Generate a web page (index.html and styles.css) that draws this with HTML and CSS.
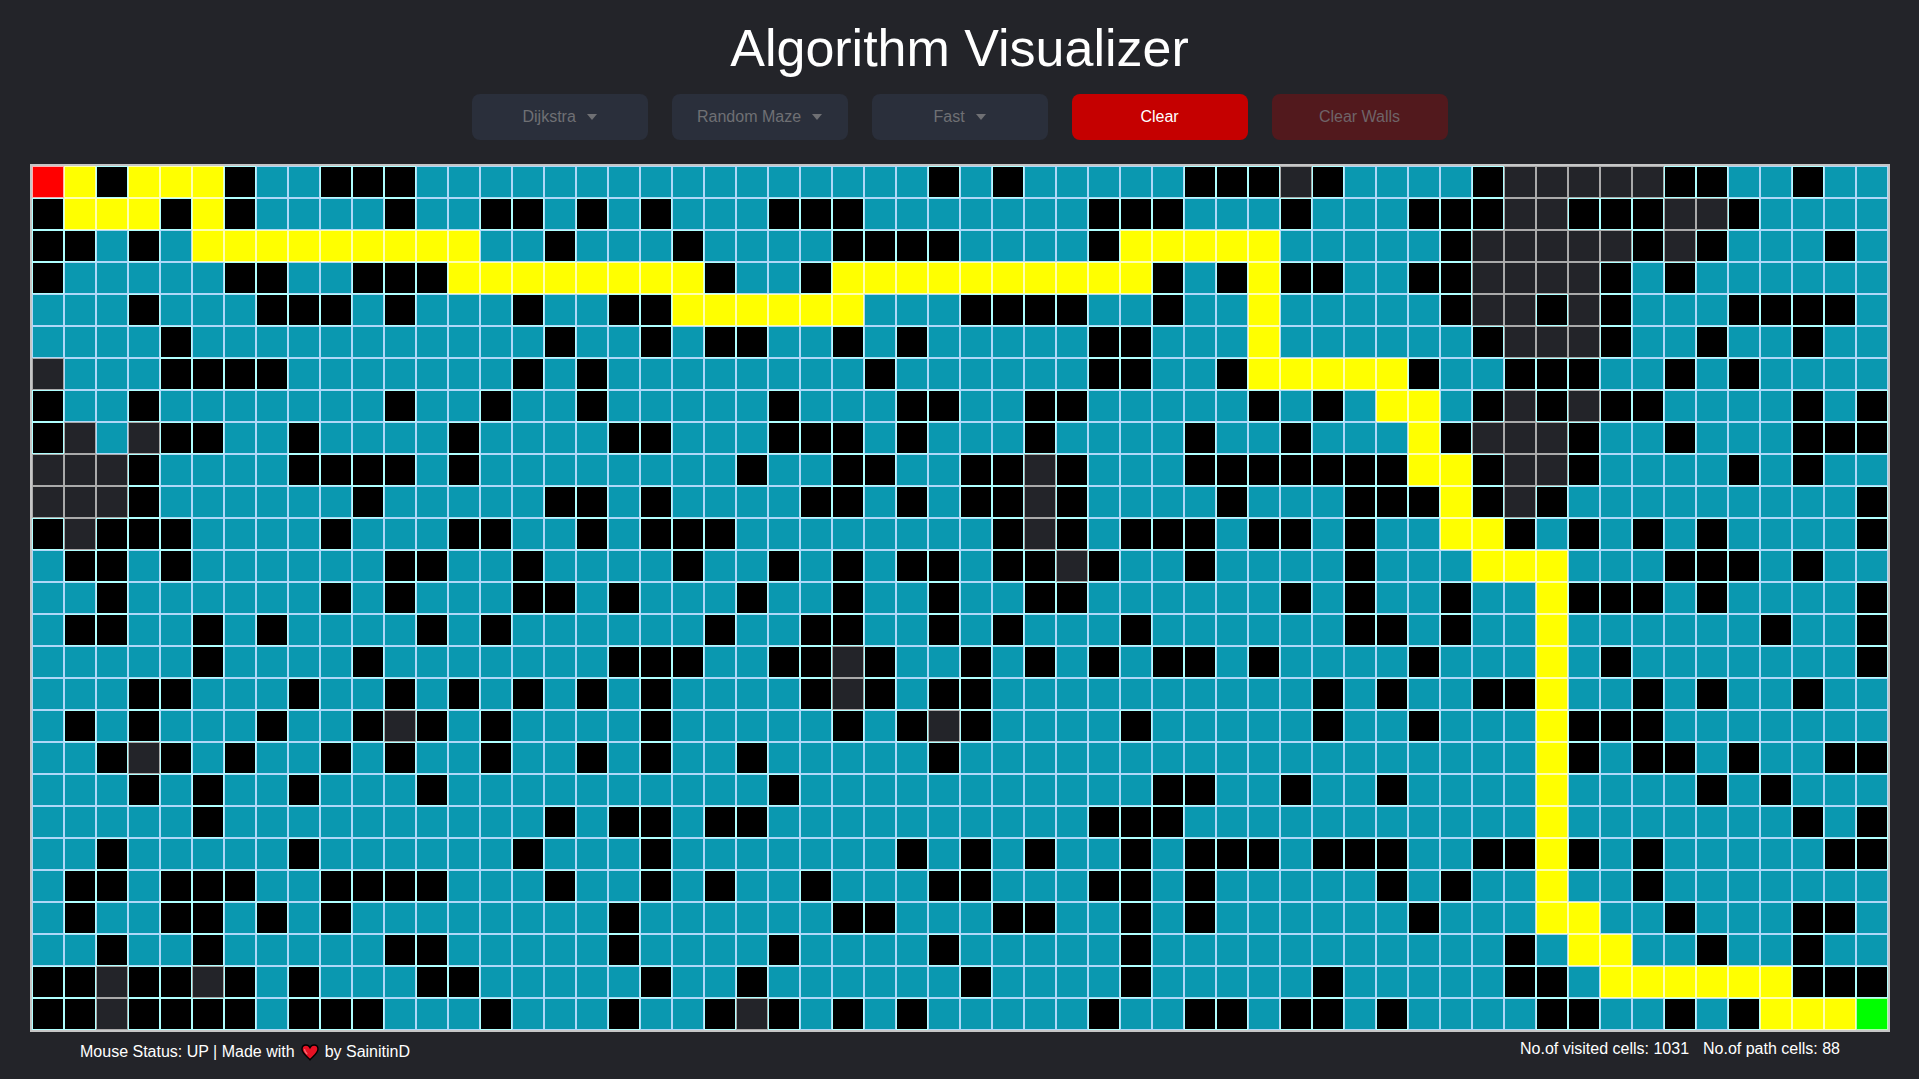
FILE: index.html
```html
<!DOCTYPE html>
<html lang="en">
<head>
  <meta charset="utf-8">
  <meta name="viewport" content="width=device-width, initial-scale=1">
  <title>Algorithm Visualizer</title>
  <link rel="stylesheet" href="styles.css">
</head>
<body>
  <header class="header">
    <h1 class="title">Algorithm Visualizer</h1>
    <div class="toolbar">
      <div class="dropdown">
        <select class="dropdown-select" aria-label="Algorithm" disabled>
          <option selected>Dijkstra</option>
        </select>
        <svg class="caret" viewBox="0 0 10 6" aria-hidden="true"><path d="M0 0h10L5 6z"/></svg>
      </div>
      <div class="dropdown">
        <select class="dropdown-select" aria-label="Maze" disabled>
          <option selected>Random Maze</option>
        </select>
        <svg class="caret" viewBox="0 0 10 6" aria-hidden="true"><path d="M0 0h10L5 6z"/></svg>
      </div>
      <div class="dropdown">
        <select class="dropdown-select" aria-label="Speed" disabled>
          <option selected>Fast</option>
        </select>
        <svg class="caret" viewBox="0 0 10 6" aria-hidden="true"><path d="M0 0h10L5 6z"/></svg>
      </div>
      <button class="button" type="button">Clear</button>
      <button class="button" type="button" disabled>Clear Walls</button>
    </div>
  </header>

  <main class="board" id="board"></main>

  <footer class="footer">
    <p class="credit">
      <span>Mouse Status: UP | Made with</span>
      <svg class="heart" viewBox="0 0 18 17" role="img" aria-label="love">
        <path d="M9 15.8C6.600 12.800 1 9.600 1 5.100 1 2.600 2.800 1 5 1c1.700 0 3.200 1 4 2.600C9.800 2 11.300 1 13 1c2.200 0 4 1.600 4 4.100 0 4.500-5.600 7.700-8 10.700z" fill="#e81224" stroke="#000" stroke-width="1.400"/>
        <path d="M3.600 5.600c.1 1.600 1 2.900 2.300 4.100" fill="none" stroke="#f4707a" stroke-width="1.300" stroke-linecap="round"/>
      </svg>
      <span>by SainitinD</span>
    </p>
    <p class="stats">
      <span>No.of visited cells: 1031</span>
      <span>No.of path cells: 88</span>
    </p>
  </footer>
  <script src="script.js"></script>
</body>
</html>
```
FILE: styles.css
```css
* {
  box-sizing: border-box;
}

body {
  margin: 0;
  background: #232429;
  color: #fff;
  font-family: Arial, "Liberation Sans", sans-serif;
  font-size: 16px;
  line-height: 20px;
}

.header {
  padding: 16px 24px 24px;
}

.title {
  margin: 0 0 14px;
  font-size: 52px;
  font-weight: 400;
  line-height: 64px;
  text-align: center;
}

.toolbar {
  display: flex;
  flex-wrap: wrap;
  justify-content: center;
  gap: 24px;
}

.dropdown,
.button {
  display: flex;
  align-items: center;
  justify-content: center;
  gap: 10px;
  width: 176px;
  height: 46px;
  border: 0;
  border-radius: 8px;
}

.dropdown {
  background: #2a2f3b;
  color: #6f7074;
}

.dropdown-select {
  appearance: none;
  padding: 0;
  border: 0;
  background: none;
  color: inherit;
  font: inherit;
  opacity: 1;
}

.caret {
  width: 10px;
  height: 6px;
  fill: currentColor;
}

.button {
  background: #c50000;
  color: #fff;
  font: inherit;
}

.button:disabled {
  background: #52191d;
  color: #6f6468;
}

.board {
  display: grid;
  grid-template-columns: repeat(58, 32px);
  grid-auto-rows: 32px;
  width: max-content;
  margin: 0 auto;
  border: 2px solid #c6c6c6;
}

.cell {
  border: 1px solid #aaa;
}

.cell-wall {
  background: #000;
  border-color: #afffff;
}

.cell-visited {
  background: #0a98b0;
  border-color: #afd8f8;
}

.cell-path {
  background: #ff0;
  border-color: #ffffaf;
}

.cell-start {
  background: #f00;
  border-color: #ffafaf;
}

.cell-end {
  background: #0f0;
  border-color: #afffaf;
}

.footer {
  display: flex;
  justify-content: space-between;
  padding: 7px 79px 0 80px;
}

.credit,
.stats {
  display: flex;
  margin: 0;
}

.credit {
  align-items: center;
  gap: 6px;
  padding-top: 3px;
}

.stats {
  gap: 14px;
}

.heart {
  width: 18px;
  height: 17px;
}
```
FILE: script.js
```js
// # wall, . visited, * path, _ untouched, S start, E end
const rows = [
  "S*#***#..###......." + ".........#.#.....###" + "_#....#_____##..#..",
  "#***#*#....#..##.#." + "#...###.......###..." + "#...###__###__#....",
  "##.#.*********..#.." + ".#....####....#*****" + ".....#_____#_#...#.",
  "#.....##..###******" + "**#..#**********#.#*" + "##..##____#.#......",
  "...#...###.#...#..#" + "#******...####..#..*" + ".....#__#_#...####.",
  "....#...........#.." + "#.##..#.#.....##...*" + "......#___#..#..#..",
  "_...####.......#.#." + ".......#......##..#*" + "****#..###..#.#....",
  "#..#.......#..#..#." + "....#...##..##.....#" + ".#.**.#_#_##....#.#",
  "#_._##..#....#....#" + "#...###.#...#....#.." + "#...*#___#..#...###",
  "___#....####.#....." + "...#..##..##_#...###" + "####**#__#....#.#..",
  "___#......#.....##." + "#....##.#.##_#....#." + "..###*#_#.........#",
  "#_###....#...##..#." + "###........#_#.###.#" + "#.#..**#.#.#.#....#",
  ".##.#......##..#..." + ".#..#.#.##.##_#..#.." + "..#...***...###.#..",
  "..#......#.#...##.#" + "...#..#..#..##......" + "#.#..#..*###.#....#",
  ".##..#.#....#.#...." + "..#..##..#.#...#...." + "..##.#..*......#..#",
  ".....#....#.......#" + "##..##_#..#.#.#.##.#" + "....#...*.#.......#",
  "...##...#..#.#.#.#." + "#....#_#.##........." + ".#.#..##*..#.#..#..",
  ".#.#...#..#_#.#...." + "#.....#.#_#....#...." + ".#..#...*###.......",
  "..#_#.#..#.#..#..#." + "#..#.....#.........." + "........*#.##.#..##",
  "...#.#..#...#......" + "....#...........##.." + "#..#....*....#.#...",
  ".....#..........#.#" + "#.##..........###..." + "........*.......#.#",
  "..#.....#......#..." + "#.......#.#.#..#.###" + ".###..##*#.#.....##",
  ".##.###..####...#.." + "#.#..#...##...##.#.." + "...#.#..*..#.......",
  ".#..##.#.#........#" + "......##...##..#.#.." + "....#...**..#...##.",
  "..#..#.....##.....#" + "....#....#.....#...." + ".......#.**..#..#..",
  "##_##_#.#...##....." + "#..#......#....#...." + ".#.....##.******###",
  "##_####.###...#...#" + "..#_#.#.#.....#..##." + "##.#....##..#.#***E"
];

const kinds = {
  "#": "cell cell-wall",
  ".": "cell cell-visited",
  "*": "cell cell-path",
  "_": "cell",
  "S": "cell cell-start",
  "E": "cell cell-end"
};

const board = document.getElementById("board");
for (const row of rows) {
  for (const mark of row) {
    const cell = document.createElement("div");
    cell.className = kinds[mark];
    board.append(cell);
  }
}
```
